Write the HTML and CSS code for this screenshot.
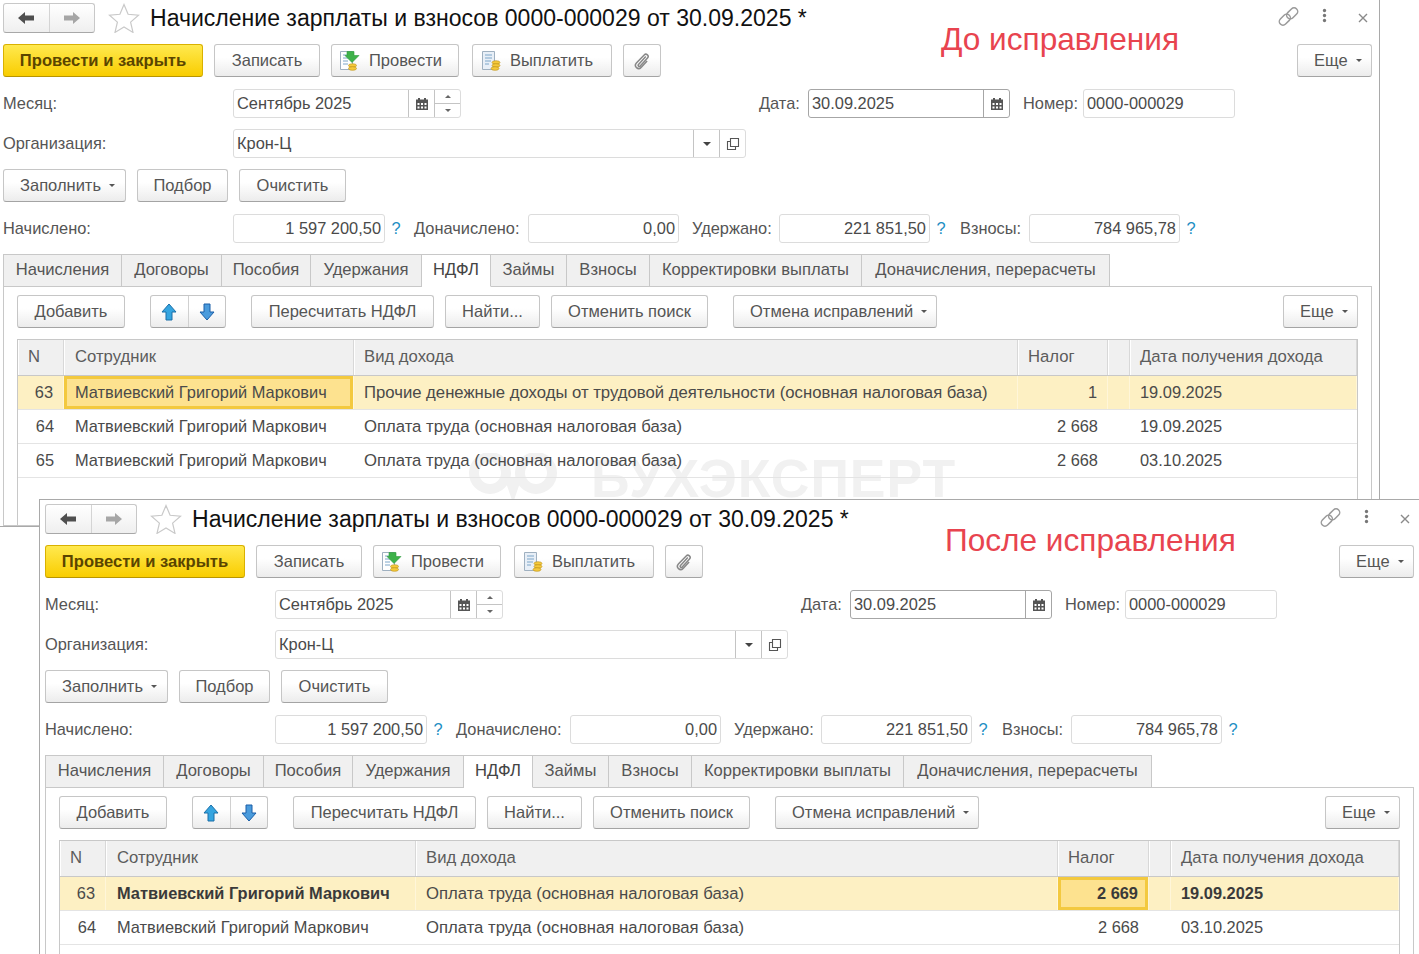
FILE: index.html
```html
<!DOCTYPE html>
<html lang="ru">
<head>
<meta charset="utf-8">
<title>Начисление зарплаты и взносов</title>
<link rel="stylesheet" href="styles.css">
</head>
<body>
<svg class="defs" width="0" height="0" aria-hidden="true">
  <defs>
    <symbol id="i-left" viewBox="0 0 18 14"><path d="M1 7l7-6v3.6h9v4.800H8V13z" fill="currentColor"/></symbol>
    <symbol id="i-right" viewBox="0 0 18 14"><path d="M17 7l-7-6v3.600H1v4.800h9V13z" fill="currentColor"/></symbol>
    <symbol id="i-star" viewBox="0 0 32 30"><path d="M16 1.500l4.100 9.800 10.400.9-7.900 6.900 2.400 10.300-9-5.500-9 5.500 2.400-10.300-7.900-6.900 10.400-.9z" fill="#fff" stroke="#c9c9c9" stroke-width="1.200"/></symbol>
    <symbol id="i-link" viewBox="0 0 20 20"><g fill="none" stroke="#9a9a9a" stroke-width="1.400"><rect x="10" y="1" width="7" height="12" rx="3.500" transform="rotate(45 13.500 7)"/><rect x="3" y="7" width="7" height="12" rx="3.500" transform="rotate(45 6.500 13)"/></g></symbol>
    <symbol id="i-more" viewBox="0 0 6 18"><g fill="#777"><circle cx="3" cy="3" r="2"/><circle cx="3" cy="9" r="2"/><circle cx="3" cy="15" r="2"/></g></symbol>
    <symbol id="i-close" viewBox="0 0 12 12"><path d="M2 2l8 8M10 2l-8 8" stroke="#8a8a8a" stroke-width="1.400" fill="none"/></symbol>
    <symbol id="i-post" viewBox="0 0 22 22"><path d="M1.500 1.500h12v18h-12z" fill="#fff" stroke="#9fb0c0"/><path d="M4 5h6M4 8h5M4 11h5M4 14h5" stroke="#7da6c9"/><path d="M8 1.500h7v4h5l-7 7-7-7h2z" fill="#3eb24a" stroke="#2b9a3b" stroke-width=".6"/><ellipse cx="13.500" cy="15.500" rx="4" ry="1.800" fill="#f5c93b" stroke="#b98d12" stroke-width=".6"/><ellipse cx="13.500" cy="18.500" rx="4" ry="1.800" fill="#f5c93b" stroke="#b98d12" stroke-width=".6"/></symbol>
    <symbol id="i-pay" viewBox="0 0 22 22"><path d="M2.500 1.500h12v18h-12z" fill="#e8eff7" stroke="#9fb0c0"/><path d="M5 5h7M5 8h7M5 11h6M5 14h4" stroke="#7da6c9"/><ellipse cx="16" cy="12.500" rx="4" ry="1.800" fill="#f5c93b" stroke="#b98d12" stroke-width=".6"/><ellipse cx="16" cy="15.500" rx="4" ry="1.800" fill="#f5c93b" stroke="#b98d12" stroke-width=".6"/><ellipse cx="15" cy="18.500" rx="4" ry="1.800" fill="#f5c93b" stroke="#b98d12" stroke-width=".6"/></symbol>
    <symbol id="i-clip" viewBox="0 0 18 18"><path d="M12.800 4.500l-7.300 8c-1 1.100.6 2.700 1.700 1.600l7.300-8c2-2.200-1.200-5.300-3.300-3.100L3.400 11c-3 3.300 1.700 7.600 4.700 4.400l6-6.500" fill="none" stroke="#888" stroke-width="1.500"/></symbol>
    <symbol id="i-cal" viewBox="0 0 14 14"><path d="M1 2.500h2V1h2v1.500h4V1h2v1.500h2V13H1z" fill="#555"/><path d="M2.500 6h2v2h-2zM6 6h2v2H6zM9.500 6h2v2h-2zM2.500 9.500h2v2h-2zM6 9.500h2v2H6zM9.500 9.500h2v2h-2z" fill="#fff"/></symbol>
    <symbol id="i-open" viewBox="0 0 14 14"><path d="M4.500 1.500h8v8h-8z" fill="none" stroke="#555" stroke-width="1.100"/><path d="M4.500 4.500h-3v8h8v-3" fill="none" stroke="#555" stroke-width="1.100"/></symbol>
    <symbol id="i-up" viewBox="0 0 16 18"><path d="M8 1l7 8h-4v8H5V9H1z" fill="#35a5e0" stroke="#1b6fa8"/></symbol>
    <symbol id="i-down" viewBox="0 0 16 18"><path d="M8 17l7-8h-4V1H5v8H1z" fill="#4a9bdc" stroke="#1b5fa8"/></symbol>
  </defs>
</svg>

<section class="win win-before">
  <div class="head">
    <div class="nav"><span class="nav-cell nav-back"><svg class="i-nav"><use href="#i-left"/></svg></span><span class="nav-cell nav-fwd"><svg class="i-nav"><use href="#i-right"/></svg></span></div>
    <svg class="star"><use href="#i-star"/></svg>
    <h1 class="title">Начисление зарплаты и взносов 0000-000029 от 30.09.2025 *</h1>
    <div class="win-tools"><svg class="t-link"><use href="#i-link"/></svg><svg class="t-more"><use href="#i-more"/></svg><svg class="t-close"><use href="#i-close"/></svg></div>
  </div>
  <div class="note note-before">До исправления</div>
  <div class="row bar-1">
    <button class="btn btn-primary w-close">Провести и закрыть</button>
    <button class="btn w-save">Записать</button>
    <button class="btn btn-ico w-post"><svg class="b-ico"><use href="#i-post"/></svg>Провести</button>
    <button class="btn btn-ico w-pay"><svg class="b-ico"><use href="#i-pay"/></svg>Выплатить</button>
    <button class="btn w-clip"><svg class="clip"><use href="#i-clip"/></svg></button>
    <button class="btn btn-menu w-more push">Еще<i class="caret"></i></button>
  </div>
  <div class="row form-1">
    <label class="lbl l-first">Месяц:</label>
    <div class="field f-month"><span class="val">Сентябрь 2025</span><span class="cell"><svg class="cal"><use href="#i-cal"/></svg></span><span class="spin"><i class="sp-up"></i><i class="sp-down"></i></span></div>
    <label class="lbl l-date">Дата:</label>
    <div class="field field-dark f-date"><span class="val">30.09.2025</span><span class="cell"><svg class="cal"><use href="#i-cal"/></svg></span></div>
    <label class="lbl l-num">Номер:</label>
    <div class="field f-num"><span class="val">0000-000029</span></div>
  </div>
  <div class="row form-2">
    <label class="lbl l-first">Организация:</label>
    <div class="field f-org"><span class="val">Крон-Ц</span><span class="cell"><i class="caret caret-dark"></i></span><span class="cell"><svg class="open"><use href="#i-open"/></svg></span></div>
  </div>
  <div class="row bar-2">
    <button class="btn btn-menu w-fill">Заполнить<i class="caret"></i></button>
    <button class="btn w-pick">Подбор</button>
    <button class="btn w-clear">Очистить</button>
  </div>
  <div class="row form-3">
    <label class="lbl l-first">Начислено:</label>
    <div class="field f-sum f-sum-first"><span class="val num">1 597 200,50</span></div><span class="q">?</span>
    <label class="lbl l-extra">Доначислено:</label>
    <div class="field f-sum"><span class="val num">0,00</span></div>
    <label class="lbl l-held">Удержано:</label>
    <div class="field f-sum"><span class="val num">221 851,50</span></div><span class="q">?</span>
    <label class="lbl l-fee">Взносы:</label>
    <div class="field f-sum"><span class="val num">784 965,78</span></div><span class="q">?</span>
  </div>
  <div class="tabs">
    <span class="tab t1">Начисления</span><span class="tab t2">Договоры</span><span class="tab t3">Пособия</span><span class="tab t4">Удержания</span><span class="tab tab-on t5">НДФЛ</span><span class="tab t6">Займы</span><span class="tab t7">Взносы</span><span class="tab t8">Корректировки выплаты</span><span class="tab t9">Доначисления, перерасчеты</span>
  </div>
  <div class="panel">
    <div class="row bar-3">
      <button class="btn w-add">Добавить</button>
      <div class="updown"><span class="ud"><svg class="arr"><use href="#i-up"/></svg></span><span class="ud"><svg class="arr"><use href="#i-down"/></svg></span></div>
      <button class="btn w-recalc">Пересчитать НДФЛ</button>
      <button class="btn w-find">Найти...</button>
      <button class="btn w-cancel">Отменить поиск</button>
      <button class="btn btn-menu w-undo">Отмена исправлений<i class="caret"></i></button>
      <button class="btn btn-menu w-more push">Еще<i class="caret"></i></button>
    </div>
    <div class="table">
      <div class="tr th"><span class="td c-n">N</span><span class="td">Сотрудник</span><span class="td">Вид дохода</span><span class="td">Налог</span><span class="td"></span><span class="td">Дата получения дохода</span></div>
      <div class="tr sel"><span class="td c-r">63</span><span class="td cur">Матвиевский Григорий Маркович</span><span class="td long">Прочие денежные доходы от трудовой деятельности (основная налоговая база)</span><span class="td c-r">1</span><span class="td"></span><span class="td">19.09.2025</span></div>
      <div class="tr"><span class="td c-r">64</span><span class="td">Матвиевский Григорий Маркович</span><span class="td long">Оплата труда (основная налоговая база)</span><span class="td c-r">2 668</span><span class="td"></span><span class="td">19.09.2025</span></div>
      <div class="tr"><span class="td c-r">65</span><span class="td">Матвиевский Григорий Маркович</span><span class="td long">Оплата труда (основная налоговая база)</span><span class="td c-r">2 668</span><span class="td"></span><span class="td">03.10.2025</span></div>
    </div>
  </div>
  <div class="wm"><svg class="wm-logo" viewBox="0 0 90 52"><g fill="none" stroke="#f1f1f1" stroke-width="10"><circle cx="22" cy="20" r="16"/><circle cx="68" cy="20" r="16"/></g><path d="M36 24h18l-9 26z" fill="#f1f1f1"/></svg><span>БУХЭКСПЕРТ</span></div>
</section>

<section class="win win-after">
  <div class="head">
    <div class="nav"><span class="nav-cell nav-back"><svg class="i-nav"><use href="#i-left"/></svg></span><span class="nav-cell nav-fwd"><svg class="i-nav"><use href="#i-right"/></svg></span></div>
    <svg class="star"><use href="#i-star"/></svg>
    <h1 class="title">Начисление зарплаты и взносов 0000-000029 от 30.09.2025 *</h1>
    <div class="win-tools"><svg class="t-link"><use href="#i-link"/></svg><svg class="t-more"><use href="#i-more"/></svg><svg class="t-close"><use href="#i-close"/></svg></div>
  </div>
  <div class="note note-after">После исправления</div>
  <div class="row bar-1">
    <button class="btn btn-primary w-close">Провести и закрыть</button>
    <button class="btn w-save">Записать</button>
    <button class="btn btn-ico w-post"><svg class="b-ico"><use href="#i-post"/></svg>Провести</button>
    <button class="btn btn-ico w-pay"><svg class="b-ico"><use href="#i-pay"/></svg>Выплатить</button>
    <button class="btn w-clip"><svg class="clip"><use href="#i-clip"/></svg></button>
    <button class="btn btn-menu w-more push">Еще<i class="caret"></i></button>
  </div>
  <div class="row form-1">
    <label class="lbl l-first">Месяц:</label>
    <div class="field f-month"><span class="val">Сентябрь 2025</span><span class="cell"><svg class="cal"><use href="#i-cal"/></svg></span><span class="spin"><i class="sp-up"></i><i class="sp-down"></i></span></div>
    <label class="lbl l-date">Дата:</label>
    <div class="field field-dark f-date"><span class="val">30.09.2025</span><span class="cell"><svg class="cal"><use href="#i-cal"/></svg></span></div>
    <label class="lbl l-num">Номер:</label>
    <div class="field f-num"><span class="val">0000-000029</span></div>
  </div>
  <div class="row form-2">
    <label class="lbl l-first">Организация:</label>
    <div class="field f-org"><span class="val">Крон-Ц</span><span class="cell"><i class="caret caret-dark"></i></span><span class="cell"><svg class="open"><use href="#i-open"/></svg></span></div>
  </div>
  <div class="row bar-2">
    <button class="btn btn-menu w-fill">Заполнить<i class="caret"></i></button>
    <button class="btn w-pick">Подбор</button>
    <button class="btn w-clear">Очистить</button>
  </div>
  <div class="row form-3">
    <label class="lbl l-first">Начислено:</label>
    <div class="field f-sum f-sum-first"><span class="val num">1 597 200,50</span></div><span class="q">?</span>
    <label class="lbl l-extra">Доначислено:</label>
    <div class="field f-sum"><span class="val num">0,00</span></div>
    <label class="lbl l-held">Удержано:</label>
    <div class="field f-sum"><span class="val num">221 851,50</span></div><span class="q">?</span>
    <label class="lbl l-fee">Взносы:</label>
    <div class="field f-sum"><span class="val num">784 965,78</span></div><span class="q">?</span>
  </div>
  <div class="tabs">
    <span class="tab t1">Начисления</span><span class="tab t2">Договоры</span><span class="tab t3">Пособия</span><span class="tab t4">Удержания</span><span class="tab tab-on t5">НДФЛ</span><span class="tab t6">Займы</span><span class="tab t7">Взносы</span><span class="tab t8">Корректировки выплаты</span><span class="tab t9">Доначисления, перерасчеты</span>
  </div>
  <div class="panel">
    <div class="row bar-3">
      <button class="btn w-add">Добавить</button>
      <div class="updown"><span class="ud"><svg class="arr"><use href="#i-up"/></svg></span><span class="ud"><svg class="arr"><use href="#i-down"/></svg></span></div>
      <button class="btn w-recalc">Пересчитать НДФЛ</button>
      <button class="btn w-find">Найти...</button>
      <button class="btn w-cancel">Отменить поиск</button>
      <button class="btn btn-menu w-undo">Отмена исправлений<i class="caret"></i></button>
      <button class="btn btn-menu w-more push">Еще<i class="caret"></i></button>
    </div>
    <div class="table">
      <div class="tr th"><span class="td c-n">N</span><span class="td">Сотрудник</span><span class="td">Вид дохода</span><span class="td">Налог</span><span class="td"></span><span class="td">Дата получения дохода</span></div>
      <div class="tr sel bold"><span class="td c-r c-plain">63</span><span class="td">Матвиевский Григорий Маркович</span><span class="td long c-plain">Оплата труда (основная налоговая база)</span><span class="td c-r cur">2 669</span><span class="td"></span><span class="td">19.09.2025</span></div>
      <div class="tr"><span class="td c-r">64</span><span class="td">Матвиевский Григорий Маркович</span><span class="td long">Оплата труда (основная налоговая база)</span><span class="td c-r">2 668</span><span class="td"></span><span class="td">03.10.2025</span></div>
    </div>
  </div>
</section>
</body>
</html>
```
FILE: styles.css
```css
* { box-sizing: border-box; }
html, body { margin: 0; height: 954px; overflow: hidden; background: #fff; }
body { position: relative; font-family: "Liberation Sans", Arial, sans-serif; font-size: 16.4px; color: #4a4a4a; }
.defs { position: absolute; }

.win { position: absolute; width: 1383px; height: 529px; padding: 4px 5px 0; background: #fff; border: 1px solid #a9a9a9; display: flex; flex-direction: column; overflow: hidden; isolation: isolate; }
.win-before { left: -3px; top: -2px; z-index: 0; }
.win-after { left: 39px; top: 499px; z-index: 1; }

.head { display: flex; align-items: center; height: 30px; flex: none; }
.nav { display: flex; width: 92px; height: 30px; border: 1px solid #c8c8c8; border-bottom-color: #a8a8a8; border-radius: 3px; background: linear-gradient(#fff, #efefef); }
.nav-cell { flex: 1; display: flex; align-items: center; justify-content: center; }
.nav-back { color: #4f4f4f; border-right: 1px solid #d4d4d4; }
.nav-fwd { color: #a6a6a6; }
.i-nav { width: 18px; height: 14px; }
.star { width: 32px; height: 30px; margin-left: 13px; }
.title { margin: 0 0 0 10px; font-size: 23.04px; font-weight: 400; color: #111; white-space: nowrap; line-height: 30px; }
.win-tools { position: absolute; right: 0; top: 0; }
.t-link, .t-more, .t-close { position: absolute; }
.t-link { right: 80px; top: 7px; width: 21px; height: 21px; }
.t-more { right: 52px; top: 9px; width: 5px; height: 15px; }
.t-close { right: 10px; top: 13px; width: 12px; height: 12px; }

.note { position: absolute; top: 20px; font-size: 31.6px; color: #e8444f; white-space: nowrap; line-height: 40px; }
.note-before { left: 943px; }
.note-after { left: 905px; }

.row { display: flex; align-items: center; flex: none; }
.bar-1 { margin-top: 11px; height: 33px; gap: 11px; padding-right: 2px; }
.form-1 { margin-top: 12px; height: 29px; }
.form-2 { margin-top: 11px; height: 29px; }
.bar-2 { margin-top: 11px; height: 33px; gap: 11px; }
.form-3 { margin-top: 12px; height: 29px; }

.btn { height: 33px; padding: 0; font: inherit; font-size: 16.5px; color: #555; border: 1px solid #c6c6c6; border-bottom-color: #a4a4a4; border-radius: 3px; background: linear-gradient(#fff 40%, #ececec); display: flex; align-items: center; justify-content: center; white-space: nowrap; flex: none; }
.btn-primary { font-weight: 700; font-size: 16.6px; color: #5a4500; border-color: #d9b100; border-bottom-color: #b89500; background: linear-gradient(#ffe94f, #f9cd00); }
.btn-menu { justify-content: flex-start; padding-left: 16px; }
.btn-ico { justify-content: flex-start; padding-left: 7px; }
.push { margin-left: auto; }
.b-ico { width: 22px; height: 22px; margin-right: 8px; }
.clip { width: 18px; height: 18px; }
.caret { display: inline-block; margin-left: 8px; width: 0; height: 0; border: 3px solid transparent; border-top: 3px solid #555; border-bottom: 0; }
.caret-dark { margin: 0; border-width: 4px 4px 0; border-top-color: #444; }
.w-close { width: 200px; } .w-save { width: 106px; } .w-post { width: 128px; } .w-pay { width: 140px; margin-left: 2px; } .w-clip { width: 38px; } .w-more { width: 75px; }
.w-fill { width: 123px; } .w-pick { width: 91px; } .w-clear { width: 107px; }
.w-add { width: 108px; } .w-recalc { width: 183px; } .w-find { width: 95px; } .w-cancel { width: 157px; } .w-undo { width: 204px; margin-left: 14px; }

.lbl { color: #555; white-space: nowrap; flex: none; }
.l-first { width: 230px; }
.l-date { margin-left: 298px; width: 49px; }
.l-num { margin-left: 13px; width: 60px; }
.l-extra { margin-left: 7px; width: 114px; }
.l-held { margin-left: 13px; width: 87px; }
.l-fee { margin-left: 8px; width: 69px; }

.field { display: flex; height: 29px; border: 1px solid #dcdcdc; border-radius: 3px; background: #fff; flex: none; align-items: stretch; }
.field-dark { border-color: #a6a6a6; }
.val { flex: 1; padding-left: 3px; line-height: 27px; color: #4a4a4a; white-space: nowrap; }
.num { text-align: right; padding: 0 3px 0 0; }
.cell { width: 26px; border-left: 1px solid #c4c4c4; display: flex; align-items: center; justify-content: center; flex: none; }
.field-dark .cell { border-left-color: #a6a6a6; }
.spin { width: 26px; border-left: 1px solid #c4c4c4; display: flex; flex-direction: column; flex: none; }
.sp-up, .sp-down { flex: 1; display: flex; align-items: center; justify-content: center; }
.sp-up { border-bottom: 1px solid #c4c4c4; }
.sp-up::after { content: ""; border: 3px solid transparent; border-top: 0; border-bottom: 3px solid #666; }
.sp-down::after { content: ""; border: 3px solid transparent; border-bottom: 0; border-top: 3px solid #666; }
.cal { width: 14px; height: 14px; }
.open { width: 14px; height: 14px; }
.f-month { width: 228px; }
.f-date { width: 202px; }
.f-num { width: 152px; }
.f-org { width: 513px; }
.f-sum { width: 151px; }
.f-sum-first { width: 152px; }
.q { width: 22px; text-align: center; color: #1f8fc4; flex: none; }

.tabs { display: flex; margin-top: 11px; height: 33px; flex: none; position: relative; z-index: 2; }
.tab { height: 33px; line-height: 30px; font-size: 16.6px; text-align: center; color: #555; background: #f0f0f0; border: 1px solid #c8c8c8; border-left: 0; white-space: nowrap; flex: none; }
.tab:first-child { border-left: 1px solid #c8c8c8; }
.tab-on { background: #fff; border-bottom-color: #fff; color: #444; }
.t1 { width: 119px; } .t2 { width: 100px; } .t3 { width: 89px; } .t4 { width: 111px; } .t5 { width: 69px; } .t6 { width: 76px; } .t7 { width: 83px; } .t8 { width: 212px; } .t9 { width: 248px; }

.panel { margin-top: -1px; width: 1369px; flex: 1; min-height: 0; border: 1px solid #c8c8c8; padding: 8px 13px 0; display: flex; flex-direction: column; position: relative; z-index: 1; }
.bar-3 { height: 33px; gap: 11px; }
.updown { display: flex; width: 76px; height: 33px; margin: 0 14px; border: 1px solid #c6c6c6; border-bottom-color: #a4a4a4; border-radius: 3px; background: linear-gradient(#fff 40%, #ececec); flex: none; }
.ud { flex: 1; display: flex; align-items: center; justify-content: center; }
.ud:first-child { border-right: 1px solid #d0d0d0; }
.arr { width: 16px; height: 18px; }

.table { margin-top: 11px; flex: 1; border: 1px solid #c8c8c8; border-bottom: 0; }
.tr { display: grid; grid-template-columns: 46px 290px 664px 90px 22px 1fr; height: 34px; border-bottom: 1px solid #e4e4e4; align-items: stretch; }
.win-after .tr { grid-template-columns: 46px 310px 642px 91px 22px 1fr; }
.td { padding: 0 10px; line-height: 33px; white-space: nowrap; overflow: hidden; color: #4a4a4a; }
.td:nth-child(2) { padding-left: 11px; }
.long { font-size: 16.7px; }
.th { height: 36px; background: #f0f0f0; border-bottom-color: #c8c8c8; }
.th .td { font-size: 16.7px; line-height: 33px; color: #5c5c5c; box-shadow: inset -1px 0 0 #d8d8d8, inset 1px 0 0 #fff; }
.sel { background: #fdf0c3; }
.sel .td { border-right: 1px solid #fff6d9; }
.c-r { text-align: right; }
.cur { background: #fde28f; box-shadow: inset 0 0 0 3px #f3c93f; }
.bold .td { font-weight: 700; color: #3a3a3a; }
.bold .c-plain { font-weight: 400; color: #4a4a4a; }

.wm { position: absolute; left: 470px; top: 449px; display: flex; align-items: center; gap: 33px; pointer-events: none; z-index: 0; }
.wm span { font-size: 53.5px; font-weight: 700; color: #f1f1f1; letter-spacing: 1px; }
.wm-logo { width: 90px; height: 52px; }
```
